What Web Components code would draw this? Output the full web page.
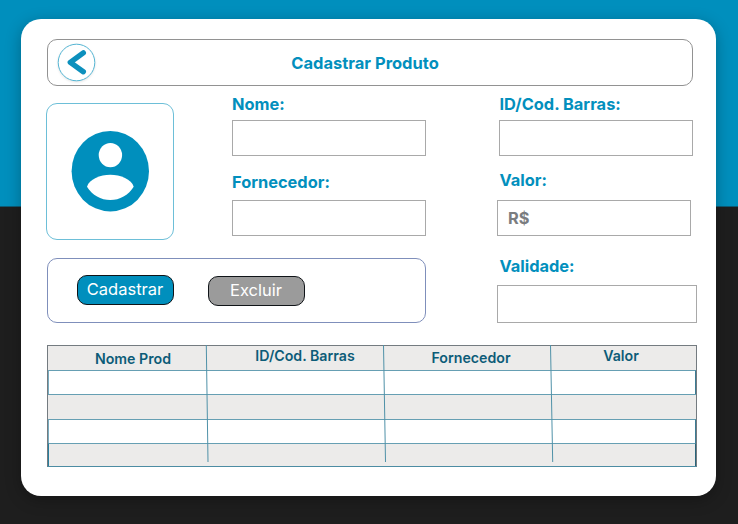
<!DOCTYPE html>
<html lang="pt-BR">
<head>
<meta charset="utf-8">
<title>Cadastrar Produto</title>
<style>
html,body{margin:0;height:100%;overflow:hidden}
body{font-family:Inter,"Liberation Sans",sans-serif;background:linear-gradient(#008fbd 0 206px,#0d5a74 206px 207px,#1e1e1e 207px);color:#028fbd}
</style>
</head>
<body>
<product-page></product-page>
<script>
const define = (name, html) => customElements.define(name, class extends HTMLElement {
  constructor() {
    super();
    const t = document.createElement('template');
    t.innerHTML = html;
    this.attachShadow({ mode: 'open' }).append(t.content.cloneNode(true));
  }
});

define('back-button', `
<style>
:host{display:block;width:38px;height:38px;flex:none}
svg{display:block;overflow:visible;filter:drop-shadow(0 1.5px 1px rgba(0,0,0,.1))}
</style>
<svg width="38" height="38" viewBox="0 0 38 38">
<circle cx="18.500" cy="18.500" r="18.300" fill="#fff" stroke="#55b5d3" stroke-width="1"/>
<path d="M25.300 8.900 12.300 18.400 25.300 27.700" fill="none" stroke="#0c90bd" stroke-width="5.400" stroke-linecap="round" stroke-linejoin="round"/>
</svg>`);

define('page-title', `
<style>
:host{display:flex;align-items:center;box-sizing:border-box;width:646px;height:47px;border:1px solid #929292;border-radius:10px;padding-left:10px}
h1{margin:0;flex:1;text-align:center;padding-right:58px;font:700 16.5px/20px Inter,sans-serif;padding-top:1px;white-space:nowrap}
</style>
<slot name="action"></slot><h1><slot></slot></h1>`);

define('user-avatar', `
<style>
:host{display:flex;box-sizing:border-box;width:128px;height:137px;border:1px solid #6dbfd8;border-radius:11px;align-items:center;justify-content:center}
svg{display:block}
</style>
<svg width="78" height="81" viewBox="0 0 78 81">
<ellipse cx="39.300" cy="40.200" rx="38.700" ry="40.200" fill="#008fbd"/>
<ellipse cx="39.400" cy="24.100" rx="11.700" ry="12.200" fill="#fff"/>
<path d="M16 55.700C18 48.500 29.300 43.800 39.300 43.800S60.700 48.500 62.700 55.700C57.300 64.300 48.800 69 39.300 69S21.300 64.300 16 55.700Z" fill="#fff"/>
</svg>`);

define('form-field', `
<style>
:host{display:flex;flex-direction:column;width:194px}
label{height:20px;font:700 16.4px/20px Inter,sans-serif;white-space:nowrap;padding-left:var(--inset,0)}
div{box-sizing:border-box;height:var(--box,36px);margin-top:var(--space,6px);border:1px solid #a9a9a9;background:#fff;padding-left:10px;display:flex;align-items:center;font:700 16.4px/20px Inter,sans-serif;color:#7a7d80}
</style>
<label><slot name="label"></slot></label><div><slot></slot></div>`);

define('action-button', `
<style>
:host{display:block}
button{display:block;box-sizing:border-box;width:97px;height:29.500px;padding:0 0 1px;border:1.5px solid #101418;border-radius:10px;background:var(--fill,#008fbd);color:#fff;font:400 16.5px/25px Inter,sans-serif}
</style>
<button><slot></slot></button>`);

define('action-bar', `
<style>
:host{display:flex;box-sizing:border-box;width:379px;height:65px;border:1px solid #7f8fbb;border-radius:10px;padding:16px 0 0 29px;gap:34px}
</style>
<slot></slot>`);

define('product-table', `
<style>
:host{display:block;position:relative;width:650px;height:122px}
.sheet{box-sizing:border-box;height:122px;border:1px solid #747b80;border-bottom:1px solid #4c8ca3;display:grid;grid-template-rows:24px 24px 25px 24px 23px;background:#ecebea}
.head{display:grid;grid-template-columns:159px 177px 167px 145px;font:600 14.2px/18px Inter,sans-serif;color:#0c5c78;text-align:center;white-space:nowrap}
.row{border-top:1px solid #669fb3;box-sizing:border-box}
.light{background:#fff;border-left:1px solid #77abbf;border-right:1px solid #3b7c94}
.last{border-left:1px solid #287f9e;border-right:1px solid #28647a}
.a{padding:4px 0 0 11px}.b{padding:1px 0 0 19px}.c{padding:3px 0 0 7px}.d{padding:1px 5px 0 0}
svg{position:absolute;left:0;top:0}
</style>
<div class="sheet">
<div class="head"><span class="a">Nome Prod</span><span class="b">ID/Cod. Barras</span><span class="c">Fornecedor</span><span class="d">Valor</span></div>
<div class="row light"></div><div class="row"></div><div class="row light"></div><div class="row last"></div>
</div>
<svg width="650" height="122" viewBox="0 0 650 122" stroke="#4f91a8" stroke-width="1">
<path d="M159.300 0 161 117M336.500 0 338.500 117M503.500 0 505.700 117"/>
</svg>`);

define('product-page', `
<style>
:host{display:block;padding:19px 0 0 20.500px}
main{box-sizing:border-box;width:695.500px;height:477px;border-radius:20px;background:#fff;padding:20px 0 0 26.500px;box-shadow:0 4px 16px rgba(0,0,0,.28)}
.body{display:grid;grid-template-columns:379px 200px;column-gap:71px;height:259px}
.left{margin-left:-1px}
.info{display:flex;gap:58px;padding-top:8px;height:147px}
.info user-avatar{margin-top:9px}
.col{display:flex;flex-direction:column;align-items:flex-start}
.supplier{margin-top:16px}
.left action-bar{margin:17px 0 0 .500px}
.right{padding-top:8px}
.code{margin-left:2px;--inset:.500px}
.price{margin-top:14px;--space:10px;--inset:2.500px}
.expiry{margin-top:20px;width:200px;--space:9px;--box:38px;--inset:2.500px}
.delete{--fill:#9b9b9b;padding-top:1px}
</style>
<main>
<page-title><back-button slot="action"></back-button>Cadastrar Produto</page-title>
<div class="body">
<div class="left">
<div class="info">
<user-avatar></user-avatar>
<div class="col">
<form-field><span slot="label">Nome:</span></form-field>
<form-field class="supplier" style="--space:8px"><span slot="label">Fornecedor:</span></form-field>
</div>
</div>
<action-bar><action-button>Cadastrar</action-button><action-button class="delete">Excluir</action-button></action-bar>
</div>
<div class="col right">
<form-field class="code"><span slot="label">ID/Cod. Barras:</span></form-field>
<form-field class="price"><span slot="label">Valor:</span>R$</form-field>
<form-field class="expiry"><span slot="label">Validade:</span></form-field>
</div>
</div>
<product-table></product-table>
</main>`);
</script>
</body>
</html>
